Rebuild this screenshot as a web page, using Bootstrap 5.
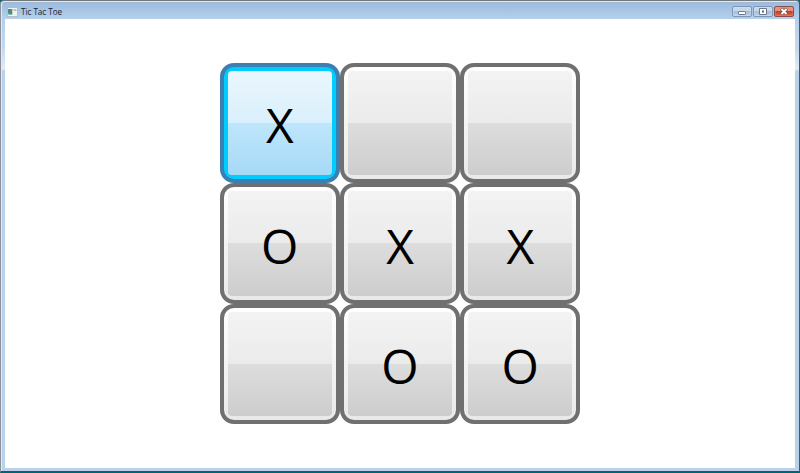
<!DOCTYPE html>
<html lang="en">
<head>
<meta charset="utf-8">
<meta name="viewport" content="width=device-width, initial-scale=1">
<title>Tic Tac Toe</title>
<link href="https://cdn.jsdelivr.net/npm/bootstrap@5.3.0/dist/css/bootstrap.min.css" rel="stylesheet">
<style>
body{font-family:"Open Sans","Noto Sans",sans-serif;background:#006570}
.win{height:473px;padding:0 4px 3px;background:linear-gradient(#9ab9dc 0,#b5d0ec 18px,#c4d9ef 48px,#e0ecf8 68px,#b9d1ea 70px,#b9d1ea 100%);border:1px solid #3c5b70;border-top-color:#777;border-left-color:#8c9299;border-right-color:#11707c;border-bottom:2px solid #006570;border-radius:4px 4px 0 0;box-shadow:inset 1px 1px 0 #dceafa}
.titlebar{height:18px;padding:4px 1px 0 2px;font-size:8.2px;line-height:14px;color:#182333}
.app-icon{margin-top:2px}
.caption{letter-spacing:-.06px;margin-left:3px}
.controls{margin-top:1px;gap:1px}
.ctl{width:20px;height:11px;border:1px solid #8196b5;border-radius:2px;background:linear-gradient(#c5d8ec 0 48%,#a3bdda 50%,#bad1e9);box-shadow:inset 0 0 0 1px #d0dff080}
.ctl svg{display:block}
.ctl-close{border-color:#8c4c4c;background:linear-gradient(#df9380 0 45%,#c73e26 50%,#d8664b);box-shadow:inset 0 0 0 1px #e5a09055}
.client{background:#fff}
.board{display:grid;grid-template-columns:repeat(3,120.25px);grid-template-rows:repeat(3,120.4px);margin-top:44px}
.cell{border:4px solid #707070;border-radius:14px;background:linear-gradient(#fff,#e9e9e9);font-size:48px;line-height:1;color:#000}
.face{margin:4px;height:calc(100% - 8px);border-radius:4px;background:linear-gradient(#f3f3f3 0,#ebebeb 50%,#dddddd 50%,#cdcdcd 100%);padding-top:4px}
.cell.focused{border-color:#3c7fb1;background:#00ccff}
.cell.focused .face{background:linear-gradient(#eaf6fd 0,#d9f0fc 50%,#bee6fd 50%,#a7d9f5 100%)}
</style>
</head>
<body class="m-0 overflow-hidden">
<div class="win d-flex flex-column">
  <header class="titlebar d-flex align-items-start flex-shrink-0">
    <svg class="app-icon flex-shrink-0" width="11" height="10" viewBox="0 0 11 10"><path fill="#eff2ef" stroke="#a5aaa6" stroke-width=".7" d="M.4.4h10.2v9.2H.4z"/><path fill="#42977b" d="M1.3 2h4v5.6h-4z"/><path fill="#4a75aa" d="M1.3 2h1.5v4H1.3z"/><path fill="#c2ccc5" d="M6.2 2h3v2h-3z"/><path fill="#96ab9f" d="M8.3 3h1v1h-1z"/></svg>
    <span class="caption">Tic Tac Toe</span>
    <div class="controls d-flex ms-auto">
      <div class="ctl"><svg width="18" height="9"><rect x="5.5" y="4.5" width="7" height="3" rx=".6" fill="#fff" stroke="#6d788c"/></svg></div>
      <div class="ctl"><svg width="18" height="9"><path fill="#fff" stroke="#6d788c" d="M5.5 1.5h7v6h-7z"/><path fill="#59657b" d="M8 3.5h2v2H8z"/></svg></div>
      <div class="ctl ctl-close"><svg width="18" height="9"><path fill="none" stroke="#70403e" stroke-width="3.3" d="M6.2 1.6l5.6 5.6m0-5.6L6.2 7.2"/><path fill="none" stroke="#fff" stroke-width="2.1" d="M6.5 1.9l5 5m0-5l-5 5"/></svg></div>
    </div>
  </header>
  <main class="client flex-grow-1 d-flex justify-content-center align-items-start">
    <div class="board">
      <div class="cell focused"><div class="face d-flex justify-content-center align-items-center">X</div></div>
      <div class="cell"><div class="face"></div></div>
      <div class="cell"><div class="face"></div></div>
      <div class="cell"><div class="face d-flex justify-content-center align-items-center">O</div></div>
      <div class="cell"><div class="face d-flex justify-content-center align-items-center">X</div></div>
      <div class="cell"><div class="face d-flex justify-content-center align-items-center">X</div></div>
      <div class="cell"><div class="face"></div></div>
      <div class="cell"><div class="face d-flex justify-content-center align-items-center">O</div></div>
      <div class="cell"><div class="face d-flex justify-content-center align-items-center">O</div></div>
    </div>
  </main>
</div>
<script src="https://cdn.jsdelivr.net/npm/bootstrap@5.3.0/dist/js/bootstrap.bundle.min.js"></script>
</body>
</html>
